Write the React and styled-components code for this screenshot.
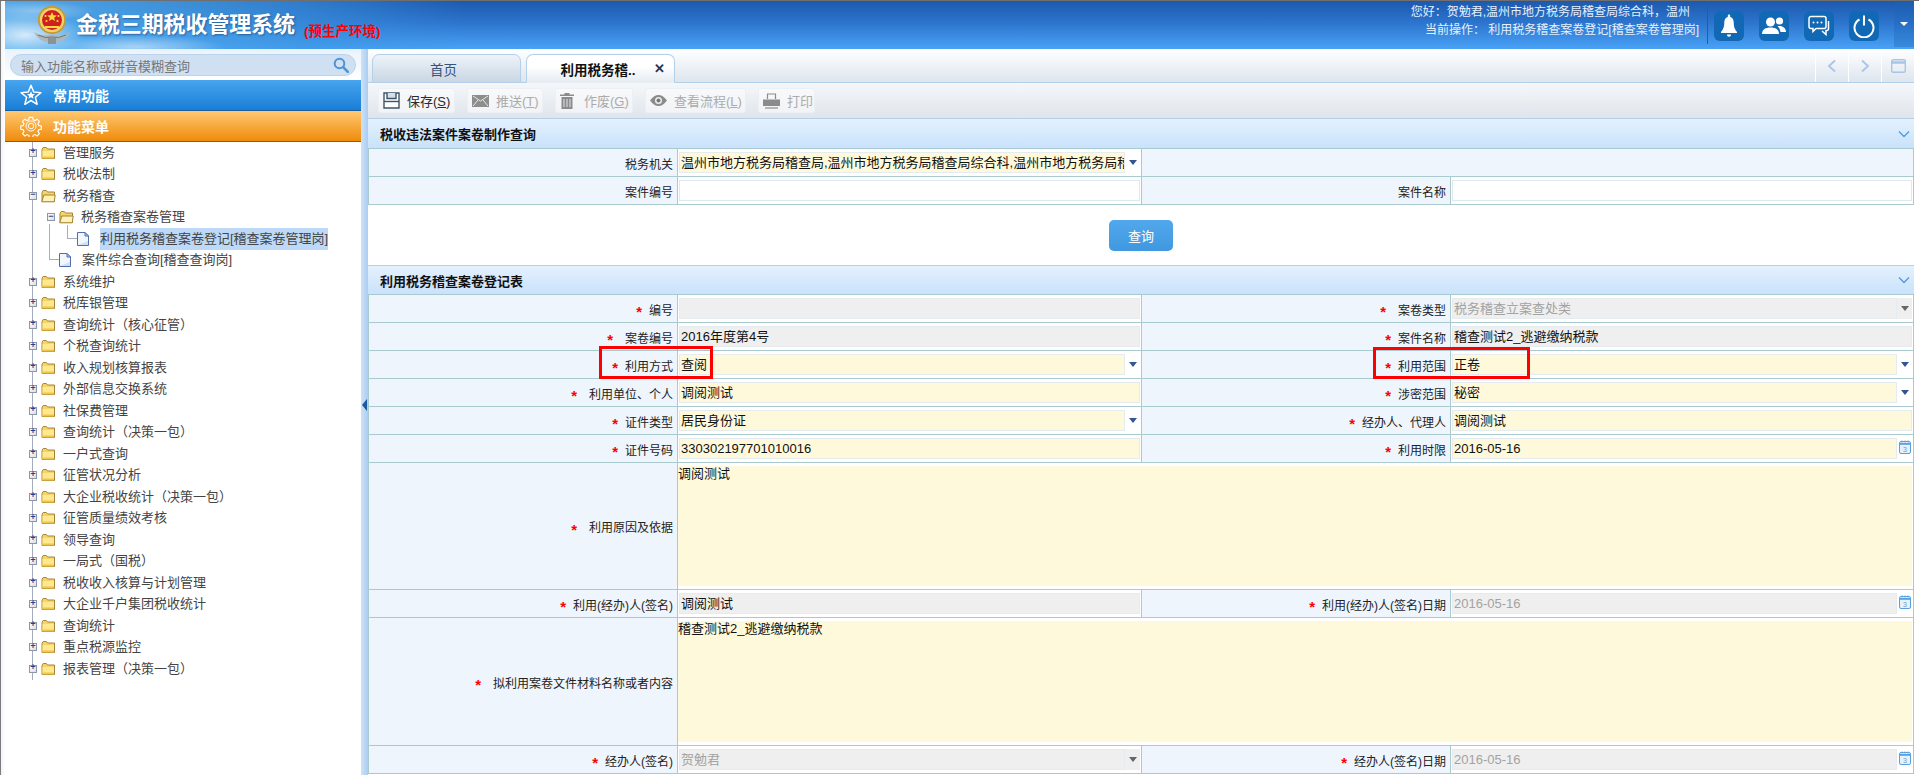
import React from 'react';
import styled, { createGlobalStyle } from 'styled-components';

const FONT = `"Liberation Sans", "Noto Sans CJK SC", sans-serif`;
const LINE = '#a9cbcf';

const GlobalStyle = createGlobalStyle`
  html, body { margin: 0; padding: 0; background: #fff; }
  * { box-sizing: border-box; text-spacing-trim: space-all; }
`;

const Shell = styled.div`
  width: 1919px;
  height: 775px;
  overflow: hidden;
  display: flex;
  flex-direction: column;
  padding: 0 5px 0 4px;
  border-top: 1px solid #6f6f6f;
  border-left: 1px solid #7b7b7b;
  font-family: ${FONT};
  font-size: 12px;
  color: #222;
  background: linear-gradient(90deg, #eef5fc, #fff 4px);
`;

/* ---- header ---- */
const Header = styled.header`
  height: 48px;
  flex: none;
  display: flex;
  align-items: stretch;
  color: #fff;
  background:
    radial-gradient(ellipse 60px 22px at 20px 34px, rgba(255, 255, 255, 0.75), transparent),
    radial-gradient(ellipse 90px 12px at 130px 46px, rgba(255, 255, 255, 0.5), transparent),
    radial-gradient(ellipse 60px 10px at 30px 10px, rgba(255, 255, 255, 0.35), transparent),
    linear-gradient(90deg, rgba(90, 180, 240, 0.85), rgba(60, 150, 225, 0.55) 300px, rgba(40, 120, 210, 0) 460px),
    linear-gradient(180deg, #1d59ae 0%, #2c74cd 45%, #49a2f5 100%);
`;

const Brand = styled.div`
  display: flex;
  align-items: center;
  padding-left: 27px;
  flex: 1;
`;

const Title = styled.h1`
  margin: 0 0 0 4px;
  font-size: 22px;
  line-height: 48px;
  font-weight: 700;
  letter-spacing: -0.1px;
  text-shadow: 1px 1px 2px rgba(20, 60, 110, 0.6);
`;

const EnvTag = styled.span`
  margin: 10px 0 0 9px;
  font-size: 13.5px;
  font-weight: 700;
  color: #f00;
`;

const UserInfo = styled.div`
  display: flex;
  flex-direction: column;
  align-items: flex-end;
  padding-top: 3px;
  padding-right: 8px;
  font-size: 12px;
  line-height: 17.5px;
  color: #e6f1fc;
  border-right: 1px solid #1f5fa8;
  margin-bottom: 5px;
`;

const UserLine = styled.div`
  padding-right: ${(p) => p.$inset || 0}px;
`;

const HeadIcons = styled.div`
  display: flex;
  gap: 15px;
  padding: 10px 15px 0 6px;
`;

const HeadIcon = styled.div`
  width: 30px;
  height: 30px;
  border-radius: 6px;
  display: flex;
  align-items: center;
  justify-content: center;
  background: #1168b4;
`;

const Caret = styled.div`
  width: 20px;
  margin-bottom: 2px;
  display: flex;
  align-items: center;
  justify-content: center;
  background: rgba(30, 100, 180, 0.35);
  &::after {
    content: '';
    border-left: 4px solid transparent;
    border-right: 4px solid transparent;
    border-top: 4px solid #fff;
  }
`;

/* ---- body ---- */
const Body = styled.div`
  flex: 1;
  min-height: 0;
  display: flex;
`;

const Sidebar = styled.aside`
  width: 356px;
  flex: none;
  background: #fff;
  display: flex;
  flex-direction: column;
`;

const SearchRow = styled.div`
  height: 31px;
  padding: 5px 5px 0;
  background: linear-gradient(180deg, #e9f2fc, #fff);
`;

const SearchBox = styled.div`
  height: 22px;
  border-radius: 11px;
  background: #cfe0f3;
  border: 1px solid #bdd3ea;
  display: flex;
  align-items: center;
  justify-content: space-between;
  padding: 0 6px 0 10px;
  font-size: 13px;
  color: #777;
`;

const MenuBar = styled.div`
  height: 31px;
  display: flex;
  align-items: center;
  gap: 11px;
  padding-left: 15px;
  font-size: 14px;
  font-weight: 700;
  color: #fff;
  background: ${(p) =>
    p.$orange
      ? 'linear-gradient(180deg, #ffc871, #ef8b0a)'
      : 'linear-gradient(180deg, #48a5ef, #187ed6)'};
  border-bottom: 1px solid ${(p) => (p.$orange ? '#3f6d8e' : '#1c5d99')};
`;

const Tree = styled.ul`
  list-style: none;
  margin: 0;
  padding: 0;
  height: 538px;
  background: linear-gradient(#a3adbd, #a3adbd) 27px 0 / 1px 100% no-repeat;
`;

const TreeRow = styled.li`
  height: 21.5px;
  display: flex;
  align-items: center;
  padding-left: ${(p) => p.$indent}px;
  font-size: 13px;
  color: #444;
  white-space: nowrap;
`;

const Toggle = styled.span`
  width: 8px;
  height: 8px;
  flex: none;
  margin-right: 4px;
  border: 1px solid #8d97a8;
  background: linear-gradient(135deg, #fff, #d9dde4);
  display: flex;
  align-items: center;
  justify-content: center;
  font-size: 9px;
  font-weight: 700;
  line-height: 1;
  color: #2c3f8f;
  font-family: "Liberation Mono", monospace;
`;

/* bottom edge sits on the row centre, the rest reaches up to the parent */
const Elbow = styled.span`
  width: 10px;
  height: ${(p) => p.$reach}px;
  flex: none;
  margin-top: -${(p) => p.$reach}px;
  margin-right: 0;
  border-left: 1px solid #a3adbd;
  border-bottom: 1px solid #a3adbd;
`;

const RowLabel = styled.span`
  margin-left: ${(p) => p.$gap}px;
  line-height: 22px;
  background: ${(p) => (p.$active ? '#bdd9f7' : 'transparent')};
`;

const Splitter = styled.div`
  width: 7px;
  flex: none;
  display: flex;
  align-items: center;
  padding: 0 0 15px 1px;
  background: linear-gradient(90deg, #cfe2f7, #a9cdf2);
  &::before {
    content: '';
    border-top: 6px solid transparent;
    border-bottom: 6px solid transparent;
    border-right: 5px solid #1b5a9e;
  }
`;

const Main = styled.main`
  flex: 1;
  min-width: 0;
  display: flex;
  flex-direction: column;
`;

/* ---- tabs + toolbar ---- */
const TabStrip = styled.div`
  height: 34px;
  flex: none;
  display: flex;
  align-items: flex-end;
  justify-content: space-between;
  padding-left: 4px;
  background: linear-gradient(180deg, #fff, #dde5ee);
  border-bottom: 1px solid #b4cfea;
`;

const Tabs = styled.div`
  display: flex;
  gap: 5px;
`;

const Tab = styled.div`
  width: 149px;
  height: 29px;
  margin-bottom: -1px;
  padding-right: ${(p) => (p.$active ? 0 : 6)}px;
  display: flex;
  align-items: center;
  justify-content: center;
  font-size: 13.5px;
  border: 1px solid #b4cfea;
  border-radius: 7px 7px 0 0;
  font-weight: ${(p) => (p.$active ? 700 : 400)};
  color: ${(p) => (p.$active ? '#111' : '#33557d')};
  border-bottom-color: ${(p) => (p.$active ? '#e8edf3' : '#b4cfea')};
  background: ${(p) =>
    p.$active ? 'linear-gradient(180deg, #fff 40%, #e6ecf3)' : 'linear-gradient(180deg, #eef3f8, #c9d6e4)'};
`;

const TabClose = styled.span`
  margin-left: 18px;
  margin-right: -24px;
  font-size: 13px;
  color: #23364f;
`;

const TabNav = styled.div`
  display: flex;
  height: 33px;
`;

const NavButton = styled.div`
  width: 33px;
  display: flex;
  align-items: center;
  justify-content: center;
  border-left: 1px solid #fff;
`;

const Toolbar = styled.div`
  height: 36px;
  flex: none;
  display: flex;
  align-items: flex-start;
  gap: 12px;
  padding: 5px 0 0 10px;
  background: linear-gradient(180deg, #f5f7fa, #dfe5ec);
  border-bottom: 1px solid #b4cfea;
`;

const ToolButton = styled.div`
  height: 25px;
  width: ${(p) => p.$width}px;
  display: flex;
  align-items: center;
  gap: ${(p) => p.$gap || 7}px;
  padding-left: 4px;
  font-size: 13px;
  white-space: nowrap;
  color: ${(p) => (p.$off ? '#ababab' : '#2b2b2b')};
  background: linear-gradient(180deg, #f8f9fb, #f1f3f6);
  border: 1px solid #eceff3;
  border-radius: 2px;
  u { text-decoration: underline; }
`;

/* ---- form ---- */
const SectionHead = styled.div`
  height: 30px;
  flex: none;
  display: flex;
  align-items: center;
  justify-content: space-between;
  padding: 0 4px 0 12px;
  font-size: 13px;
  font-weight: 700;
  color: #111;
  background: linear-gradient(180deg, #e4f1fe, #c9e2fb);
  border-top: ${(p) => (p.$lined ? '1px solid #b4cfea' : '0')};
  border-bottom: 1px solid ${LINE};
`;

const Form = styled.div`
  flex: none;
  border-right: 1px solid ${LINE};
`;

const Row = styled.div`
  position: relative;
  display: grid;
  grid-template-columns: 309px 464px 309px 1fr;
  height: ${(p) => p.$height || 28}px;
  border-bottom: 1px solid ${LINE};
`;

const Label = styled.div`
  display: flex;
  align-items: center;
  justify-content: flex-end;
  gap: ${(p) => (p.$wide ? 12 : 7)}px;
  padding: 1px 4px 0 0;
  font-size: 12px;
  color: #222;
  background: #eef5fd;
  border-left: 1px solid ${LINE};
  white-space: nowrap;
`;

const Star = styled.span`
  color: #f00;
  font-weight: 700;
  font-size: 15px;
  line-height: 1;
  padding-top: 5px;
`;

const Filler = styled.div`
  grid-column: span 2;
  background: #eef5fd;
  border-left: 1px solid ${LINE};
`;

const Cell = styled.div`
  display: flex;
  align-items: stretch;
  padding: 3px 1px;
  background: #fff;
  border-left: 1px solid ${LINE};
  min-width: 0;
  grid-column: ${(p) => (p.$span ? `span ${p.$span}` : 'auto')};
`;

const TONES = { yellow: '#fff9dc', grey: '#efefef', white: '#fff' };

const Field = styled.div`
  flex: 1;
  min-width: 0;
  padding: 1px 1px 0;
  font-size: 13px;
  line-height: 18px;
  overflow: hidden;
  white-space: nowrap;
  color: ${(p) => (p.$muted ? '#a3a3a3' : '#111')};
  background: ${(p) => TONES[p.$tone]};
  border: 1px solid ${(p) => (p.$tone === 'white' ? '#dfe8ee' : '#e6ebef')};
`;

const AreaCell = styled(Cell)`
  padding: 3px 1px 3px 0;
`;

const Area = styled.div`
  flex: 1;
  font-size: 13px;
  line-height: 15px;
  color: #111;
  background: #fff9dc;
`;

const Arrow = styled.div`
  width: 15px;
  flex: none;
  display: flex;
  justify-content: center;
  padding-top: 8px;
  background: ${(p) => (p.$off ? '#efefef' : '#fff')};
  &::after {
    content: '';
    height: 0;
    border-left: 4.5px solid transparent;
    border-right: 4.5px solid transparent;
    border-top: 5px solid ${(p) => (p.$off ? '#666' : '#35558f')};
  }
`;

const DateSlot = styled.div`
  width: 15px;
  flex: none;
  padding: 2px 0 0 2px;
`;

const ButtonRow = styled.div`
  height: 60px;
  flex: none;
  display: flex;
  justify-content: center;
  padding-top: 15px;
  background: #fff;
`;

const QueryButton = styled.button`
  width: 64px;
  height: 31px;
  border: 0;
  border-radius: 5px;
  font-family: ${FONT};
  font-size: 13px;
  color: #fff;
  background: linear-gradient(180deg, #52a8ec, #3f98e0);
`;

const RedMark = styled.div`
  position: absolute;
  left: ${(p) => p.$left}px;
  top: ${(p) => p.$top}px;
  width: ${(p) => p.$width}px;
  height: ${(p) => p.$height}px;
  border: 3px solid #f00;
  pointer-events: none;
`;

/* ---- drawings ---- */
const Emblem = () => (
  <svg width="40" height="40" viewBox="0 0 40 40">
    <path d="M2 27 Q12 33 20 29 Q28 33 38 27 Q34 37 20 38 Q6 37 2 27Z" fill="#aeb6b8" />
    <path d="M6 30 Q14 34 20 32 Q26 34 34 30" fill="none" stroke="#6e787b" strokeWidth="1" />
    <path d="M16 33h8v6h-8z" fill="#8a9497" />
    <circle cx="20" cy="15" r="14" fill="#c99a2e" />
    <circle cx="20" cy="15" r="12.2" fill="#f0d36a" />
    <circle cx="20" cy="15" r="10" fill="#cf2020" />
    <path d="M20 7l1.4 3.2 3.4.3-2.6 2.2.8 3.3-3-1.8-3 1.8.8-3.3-2.6-2.2 3.4-.3z" fill="#ffd93b" />
    <circle cx="13.5" cy="11" r="1.1" fill="#ffd93b" />
    <circle cx="26.5" cy="11" r="1.1" fill="#ffd93b" />
    <circle cx="14.5" cy="16" r="1.1" fill="#ffd93b" />
    <circle cx="25.5" cy="16" r="1.1" fill="#ffd93b" />
    <path d="M13 21h14v2H13z" fill="#ffd93b" />
  </svg>
);

const BellIcon = () => (
  <svg width="18" height="24" viewBox="0 0 18 24" fill="#fff">
    <path d="M9 0.5c.8 0 1.2.5 1.2 1.3v1.1c2.6.7 3.5 3 3.5 5.6 0 4 .9 7 3.3 9.5v1H1v-1c2.4-2.5 3.3-5.500 3.300-9.500 0-2.600.9-4.900 3.500-5.600V1.800C7.800 1 8.200.5 9 .5z" />
    <path d="M7 20.500h4c0 1.300-.8 2.300-2 2.300s-2-1-2-2.300z" />
  </svg>
);

const PeopleIcon = () => (
  <svg width="24" height="20" viewBox="0 0 24 20" fill="#fff">
    <circle cx="8.500" cy="6" r="4.500" />
    <path d="M0 18c0-4.500 3.500-6.500 8.500-6.500S17 13.500 17 18z" />
    <circle cx="17.500" cy="5" r="3.600" />
    <path d="M15.500 10c3.800-.6 8.500 1 8.500 6h-5.500c-.4-2.500-1.300-4.500-3-6z" />
  </svg>
);

const ChatIcon = () => (
  <svg width="22" height="22" viewBox="0 0 22 22" fill="none" stroke="#fff" strokeWidth="1.500">
    <path d="M3 1.500h13a2 2 0 0 1 2 2v8a2 2 0 0 1-2 2H8l-3 3v-3H3a2 2 0 0 1-2-2v-8a2 2 0 0 1 2-2z" />
    <path d="M20.500 6v8a1.500 1.500 0 0 1-1.500 1.500h-1v4l-4-3.500" />
    <g fill="#fff" stroke="none">
      <circle cx="5.500" cy="7.500" r="1" />
      <circle cx="9.500" cy="7.500" r="1" />
      <circle cx="13.500" cy="7.500" r="1" />
    </g>
  </svg>
);

const PowerIcon = () => (
  <svg width="22" height="23" viewBox="0 0 22 23" fill="none" stroke="#fff" strokeWidth="2">
    <path d="M6.500 4.500a9.500 9.500 0 1 0 9 0" />
    <path d="M11 0.500v10" />
  </svg>
);

const StarIcon = () => (
  <svg width="22" height="22" viewBox="0 0 24 24">
    <path d="M12 1.500l3 7.300 7.800.6-6 5.100 1.900 7.600L12 18l-6.700 4.100 1.900-7.600-6-5.100 7.800-.6z" fill="none" stroke="#fff" strokeWidth="1.600" strokeLinejoin="round" />
    <path d="M12 8l1.300 2.800 3 .3-2.300 2 .7 3-2.700-1.600-2.700 1.600.7-3-2.300-2 3-.3z" fill="#fff" />
  </svg>
);

const GearIcon = () => (
  <svg width="22" height="22" viewBox="0 0 24 24" fill="none" stroke="#fff">
    <path
      strokeWidth="1.400"
      d="M10 1.500h4l.6 3 2.200.9 2.600-1.700 2.800 2.800-1.700 2.600.9 2.200 3 .6v4l-3 .6-.9 2.200 1.700 2.600-2.800 2.800-2.600-1.700-2.200.9-.6 3h-4l-.6-3-2.200-.9-2.600 1.700-2.800-2.800 1.700-2.600-.9-2.200-3-.6v-4l3-.6.900-2.200L1.600 6.500l2.800-2.800L7 5.400l2.200-.9z"
      transform="translate(1.200 1.200) scale(0.9)"
    />
    <circle cx="12" cy="12" r="5.500" strokeWidth="1" />
    <circle cx="12" cy="12" r="3" strokeWidth="1" />
  </svg>
);

const SearchIcon = () => (
  <svg width="16" height="16" viewBox="0 0 16 16" fill="none" stroke="#4d94d6">
    <circle cx="6.500" cy="6.500" r="4.800" strokeWidth="2" />
    <path d="M10.200 10.200l4.600 4.600" strokeWidth="2.600" strokeLinecap="round" />
  </svg>
);

const FolderIcon = ({ open }) => (
  <svg width="15" height="14" viewBox="0 0 15 14">
    <path d="M1 3.500V12.500h12.500V3H6.500L5.300 1.500H2.200z" fill="#f6d568" stroke="#a58338" />
    {open ? (
      <path d="M.8 12.800 2.800 6h11.400l-1 6.800z" fill="#fff3b8" stroke="#a58338" />
    ) : (
      <path d="M1.500 5h11.500v7H1.500z" fill="#ffe88e" />
    )}
    {!open && <path d="M1.500 10.500h11.500v2H1.500z" fill="#f0c445" />}
  </svg>
);

const FileIcon = () => (
  <svg width="12" height="14" viewBox="0 0 12 14">
    <path d="M.5.500h7.500l3.500 3.500v9.500H.5z" fill="#f2f6fd" stroke="#4f6fb0" />
    <path d="M8 .500v3.500h3.500z" fill="#c3d3ef" stroke="#4f6fb0" />
    <path d="M1 13h10V9z" fill="#d3dff4" />
  </svg>
);

const SaveIcon = () => (
  <svg width="17" height="17" viewBox="0 0 17 17" fill="none" stroke="#3e5468" strokeWidth="1.400">
    <path d="M1 1h15v15H1z" fill="#fff" />
    <path d="M4 1v5.500h9V1" fill="#d8dee5" />
    <path d="M1 9.500h15" />
  </svg>
);

const MailIcon = () => (
  <svg width="17" height="12" viewBox="0 0 17 12">
    <path d="M0 0h17v12H0z" fill="#8d8d8d" />
    <path d="M1 1l7.500 5L16 1M1 11l5-6M16 11l-5-6" fill="none" stroke="#e6e6e6" />
  </svg>
);

const TrashIcon = () => (
  <svg width="14" height="16" viewBox="0 0 14 16" fill="#8b8b8b">
    <path d="M4.500 0h5v1.500H14V3H0V1.500h4.500zM1.500 4h11v12h-11z" />
    <path d="M4 6v8M7 6v8M10 6v8" stroke="#e4e4e4" />
  </svg>
);

const EyeIcon = () => (
  <svg width="17" height="11" viewBox="0 0 17 11">
    <path d="M0 5.500C3 1.500 5.500 0 8.500 0S14 1.500 17 5.500C14 9.500 11.500 11 8.500 11S3 9.500 0 5.500z" fill="#8b8b8b" />
    <circle cx="8.500" cy="5.500" r="3.500" fill="#eee" />
    <circle cx="8.500" cy="5.500" r="2" fill="#777" />
  </svg>
);

const PrinterIcon = () => (
  <svg width="17" height="16" viewBox="0 0 17 16" fill="none">
    <path d="M4.500 6V1h8v5" stroke="#8b8b8b" strokeWidth="1.200" />
    <path d="M0 6.500h17V13H0z" fill="#8b8b8b" />
    <path d="M2 15h13" stroke="#8b8b8b" strokeWidth="1.200" />
  </svg>
);

const ChevronDown = () => (
  <svg width="12" height="8" viewBox="0 0 12 8" fill="none" stroke="#4f9be0" strokeWidth="1.300">
    <path d="M1 1.500l5 5 5-5" />
  </svg>
);

const CalendarIcon = () => (
  <svg width="12" height="14" viewBox="0 0 12 14">
    <rect x="0.500" y="1.500" width="11" height="12" rx="1.500" fill="#e6f1fb" stroke="#5aa0dc" />
    <path d="M.5 3h11v1.800H.5z" fill="#5aa0dc" />
    <path d="M3 .5v2M6 .5v2M9 .5v2" stroke="#5aa0dc" />
    <text x="6" y="12" fontSize="7" textAnchor="middle" fill="#6f9cc8" fontFamily="Liberation Sans">3</text>
  </svg>
);

const NavIcon = ({ d }) => (
  <svg width="12" height="14" viewBox="0 0 12 14" fill="none" stroke="#a9c5e6" strokeWidth="1.800">
    <path d={d} />
  </svg>
);

/* ---- data ---- */
const MENU = [
  { text: '管理服务' },
  { text: '税收法制' },
  { text: '税务稽查', open: true },
  { text: '税务稽查案卷管理', level: 2, open: true },
  { text: '利用税务稽查案卷登记[稽查案卷管理岗]', level: 3, file: true, active: true },
  { text: '案件综合查询[稽查查询岗]', level: 2, file: true },
  { text: '系统维护' },
  { text: '税库银管理' },
  { text: '查询统计（核心征管）' },
  { text: '个税查询统计' },
  { text: '收入规划核算报表' },
  { text: '外部信息交换系统' },
  { text: '社保费管理' },
  { text: '查询统计（决策一包）' },
  { text: '一户式查询' },
  { text: '征管状况分析' },
  { text: '大企业税收统计（决策一包）' },
  { text: '征管质量绩效考核' },
  { text: '领导查询' },
  { text: '一局式（国税）' },
  { text: '税收收入核算与计划管理' },
  { text: '大企业千户集团税收统计' },
  { text: '查询统计' },
  { text: '重点税源监控' },
  { text: '报表管理（决策一包）' },
];

const TOOLS = [
  { icon: <SaveIcon />, text: '保存', key: 'S', width: 77 },
  { icon: <MailIcon />, text: '推送', key: 'T', width: 76, off: true },
  { icon: <TrashIcon />, text: '作废', key: 'G', width: 78, off: true, gap: 10 },
  { icon: <EyeIcon />, text: '查看流程', key: 'L', width: 101, off: true },
  { icon: <PrinterIcon />, text: '打印', width: 57, off: true },
];

const TreeItem = ({ item }) => {
  const level = item.level || 1;
  if (item.file) {
    return (
      <TreeRow $indent={level === 2 ? 44 : 62}>
        <Elbow $reach={level === 2 ? 36 : 14} />
        <FileIcon />
        <RowLabel $gap={11} $active={item.active}>{item.text}</RowLabel>
      </TreeRow>
    );
  }
  return (
    <TreeRow $indent={level === 2 ? 42 : 24}>
      <Toggle>{item.open ? '−' : '+'}</Toggle>
      <FolderIcon open={item.open} />
      <RowLabel $gap={7}>{item.text}</RowLabel>
    </TreeRow>
  );
};

const FieldLabel = ({ text, wide, plain }) => (
  <Label $wide={wide}>
    {!plain && <Star>*</Star>}
    <span>{text}</span>
  </Label>
);

const Value = ({ kind, tone = 'yellow', muted, children, span }) => (
  <Cell $span={span}>
    <Field $tone={tone} $muted={muted}>{children}</Field>
    {kind === 'select' && <Arrow $off={tone === 'grey'} />}
    {kind === 'date' && (
      <DateSlot>
        <CalendarIcon />
      </DateSlot>
    )}
  </Cell>
);

export default function App() {
  return (
    <Shell>
      <GlobalStyle />
      <Header>
        <Brand>
          <Emblem />
          <Title>金税三期税收管理系统</Title>
          <EnvTag>(预生产环境)</EnvTag>
        </Brand>
        <UserInfo>
          <UserLine $inset={9}>您好：贺勉君,温州市地方税务局稽查局综合科，温州</UserLine>
          <UserLine>当前操作： 利用税务稽查案卷登记[稽查案卷管理岗]</UserLine>
        </UserInfo>
        <HeadIcons>
          <HeadIcon><BellIcon /></HeadIcon>
          <HeadIcon><PeopleIcon /></HeadIcon>
          <HeadIcon><ChatIcon /></HeadIcon>
          <HeadIcon><PowerIcon /></HeadIcon>
        </HeadIcons>
        <Caret />
      </Header>

      <Body>
        <Sidebar>
          <SearchRow>
            <SearchBox>
              输入功能名称或拼音模糊查询
              <SearchIcon />
            </SearchBox>
          </SearchRow>
          <MenuBar>
            <StarIcon />
            常用功能
          </MenuBar>
          <MenuBar $orange>
            <GearIcon />
            功能菜单
          </MenuBar>
          <Tree>
            {MENU.map((item) => (
              <TreeItem key={item.text} item={item} />
            ))}
          </Tree>
        </Sidebar>
        <Splitter />

        <Main>
          <TabStrip>
            <Tabs>
              <Tab>首页</Tab>
              <Tab $active>
                利用税务稽..
                <TabClose>✕</TabClose>
              </Tab>
            </Tabs>
            <TabNav>
              <NavButton><NavIcon d="M9 1.500L3 7l6 5.500" /></NavButton>
              <NavButton><NavIcon d="M3 1.500L9 7l-6 5.500" /></NavButton>
              <NavButton>
                <svg width="15" height="14" viewBox="0 0 15 14" fill="none" stroke="#a9c5e6" strokeWidth="1.400">
                  <rect x="0.700" y="0.700" width="13.600" height="12.600" rx="1.500" />
                  <path d="M.7 3.500h13.600" strokeWidth="2.500" />
                </svg>
              </NavButton>
            </TabNav>
          </TabStrip>

          <Toolbar>
            {TOOLS.map((tool) => (
              <ToolButton key={tool.text} $off={tool.off} $width={tool.width} $gap={tool.gap}>
                {tool.icon}
                <span>
                  {tool.text}
                  {tool.key && <>(<u>{tool.key}</u>)</>}
                </span>
              </ToolButton>
            ))}
          </Toolbar>

          <SectionHead>
            税收违法案件案卷制作查询
            <ChevronDown />
          </SectionHead>
          <Form>
            <Row>
              <FieldLabel plain text="税务机关" />
              <Value kind="select">温州市地方税务局稽查局,温州市地方税务局稽查局综合科,温州市地方税务局稽</Value>
              <Filler />
            </Row>
            <Row>
              <FieldLabel plain text="案件编号" />
              <Value tone="white" />
              <FieldLabel plain text="案件名称" />
              <Value tone="white" />
            </Row>
          </Form>
          <ButtonRow>
            <QueryButton>查询</QueryButton>
          </ButtonRow>

          <SectionHead $lined>
            利用税务稽查案卷登记表
            <ChevronDown />
          </SectionHead>
          <Form>
            <Row>
              <FieldLabel text="编号" />
              <Value tone="grey" />
              <FieldLabel wide text="案卷类型" />
              <Value kind="select" tone="grey" muted>税务稽查立案查处类</Value>
            </Row>
            <Row>
              <FieldLabel wide text="案卷编号" />
              <Value tone="grey">2016年度第4号</Value>
              <FieldLabel text="案件名称" />
              <Value tone="grey">稽查测试2_逃避缴纳税款</Value>
            </Row>
            <Row>
              <FieldLabel text="利用方式" />
              <Value kind="select">查阅</Value>
              <FieldLabel text="利用范围" />
              <Value kind="select">正卷</Value>
              <RedMark $left={231} $top={-5} $width={114} $height={33} />
              <RedMark $left={1005} $top={-4} $width={157} $height={32} />
            </Row>
            <Row>
              <FieldLabel wide text="利用单位、个人" />
              <Value>调阅测试</Value>
              <FieldLabel text="涉密范围" />
              <Value kind="select">秘密</Value>
            </Row>
            <Row>
              <FieldLabel text="证件类型" />
              <Value kind="select">居民身份证</Value>
              <FieldLabel text="经办人、代理人" />
              <Value>调阅测试</Value>
            </Row>
            <Row>
              <FieldLabel text="证件号码" />
              <Value>330302197701010016</Value>
              <FieldLabel text="利用时限" />
              <Value kind="date">2016-05-16</Value>
            </Row>
            <Row $height={127}>
              <FieldLabel wide text="利用原因及依据" />
              <AreaCell $span={3}>
                <Area>调阅测试</Area>
              </AreaCell>
            </Row>
            <Row>
              <FieldLabel text="利用(经办)人(签名)" />
              <Value tone="grey">调阅测试</Value>
              <FieldLabel text="利用(经办)人(签名)日期" />
              <Value kind="date" tone="grey" muted>2016-05-16</Value>
            </Row>
            <Row $height={128}>
              <FieldLabel wide text="拟利用案卷文件材料名称或者内容" />
              <AreaCell $span={3}>
                <Area>稽查测试2_逃避缴纳税款</Area>
              </AreaCell>
            </Row>
            <Row>
              <FieldLabel text="经办人(签名)" />
              <Value kind="select" tone="grey" muted>贺勉君</Value>
              <FieldLabel text="经办人(签名)日期" />
              <Value kind="date" tone="grey" muted>2016-05-16</Value>
            </Row>
          </Form>
        </Main>
      </Body>
    </Shell>
  );
}
